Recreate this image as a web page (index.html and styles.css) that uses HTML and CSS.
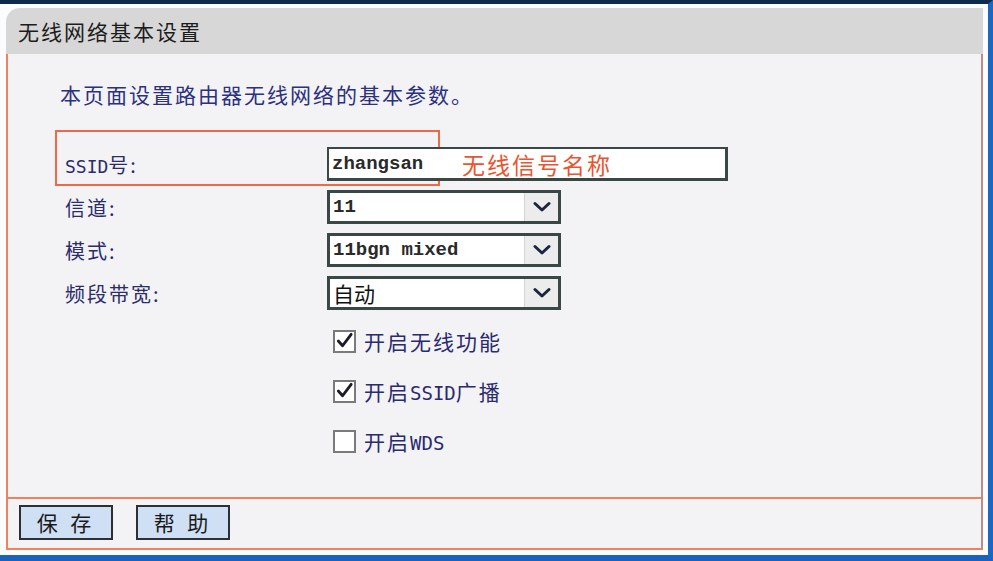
FILE: index.html
```html
<!DOCTYPE html>
<html lang="zh-CN">
<head>
<meta charset="utf-8">
<title>无线网络基本设置</title>
<link rel="stylesheet" href="styles.css">
</head>
<body>
<div class="screen">
  <div class="panel">
    <div class="panel-head">无线网络基本设置</div>
    <div class="panel-body">
      <div class="content">
        <p class="desc">本页面设置路由器无线网络的基本参数。</p>
        <div class="form">
          <div class="mark"></div>
          <div class="label"><span class="mono">SSID</span>号:</div>
          <div class="textbox"><span class="val">zhangsan</span><span class="note">无线信号名称</span></div>
          <div class="label">信道:</div>
          <div class="select"><span class="val">11</span><span class="arrow"><svg width="18" height="12" viewBox="0 0 18 12"><path d="M2 2.5 L9 9 L16 2.5" fill="none" stroke="#1d2340" stroke-width="3" stroke-linecap="round" stroke-linejoin="round"/></svg></span></div>
          <div class="label">模式:</div>
          <div class="select"><span class="val">11bgn mixed</span><span class="arrow"><svg width="18" height="12" viewBox="0 0 18 12"><path d="M2 2.5 L9 9 L16 2.5" fill="none" stroke="#1d2340" stroke-width="3" stroke-linecap="round" stroke-linejoin="round"/></svg></span></div>
          <div class="label">频段带宽:</div>
          <div class="select"><span class="val cjk">自动</span><span class="arrow"><svg width="18" height="12" viewBox="0 0 18 12"><path d="M2 2.5 L9 9 L16 2.5" fill="none" stroke="#1d2340" stroke-width="3" stroke-linecap="round" stroke-linejoin="round"/></svg></span></div>
          <div class="checks">
            <div class="check"><span class="box"><svg width="20" height="20" viewBox="0 0 20 20"><path d="M3.5 10 L8 15 L17 3" fill="none" stroke="#1e1a2a" stroke-width="3" stroke-linecap="round" stroke-linejoin="round"/></svg></span><span class="ctext">开启无线功能</span></div>
            <div class="check"><span class="box"><svg width="20" height="20" viewBox="0 0 20 20"><path d="M3.5 10 L8 15 L17 3" fill="none" stroke="#1e1a2a" stroke-width="3" stroke-linecap="round" stroke-linejoin="round"/></svg></span><span class="ctext">开启<span class="mono">SSID</span>广播</span></div>
            <div class="check"><span class="box"></span><span class="ctext">开启<span class="mono">WDS</span></span></div>
          </div>
        </div>
      </div>
      <div class="actions">
        <button class="btn">保 存</button>
        <button class="btn">帮 助</button>
      </div>
    </div>
  </div>
</div>
</body>
</html>
```

FILE: styles.css
```css
* { box-sizing: border-box; }
html, body { margin: 0; padding: 0; }
body {
  width: 993px;
  height: 561px;
  overflow: hidden;
  font-family: "Noto Sans CJK SC", "Noto Sans", sans-serif;
}
.screen {
  width: 993px;
  height: 561px;
  background: #fbfcfd;
  border-top: 4px solid #0d2a4c;
  border-right: 5px solid #1b67c2;
  border-bottom: 6px solid #1a62bd;
  padding: 4px 5px 5px 6px;
}
.panel {
  height: 542px;
  display: flex;
  flex-direction: column;
}
.panel-head {
  height: 46px;
  flex: none;
  background: #d7d7d7;
  border-top-left-radius: 14px;
  display: flex;
  align-items: center;
  padding: 0 0 1px 12px;
  font-size: 21px;
  letter-spacing: 2px;
  color: #1c1c1c;
}
.panel-body {
  flex: 1;
  display: flex;
  flex-direction: column;
  background: #f3f3f5;
  border-left: 2px solid #f2805c;
  border-right: 2px solid #b88e86;
  border-bottom: 2px solid #f2805c;
}
.content {
  flex: 1;
  padding: 27px 0 0 52px;
  border-bottom: 2px solid #f2805c;
}
.desc {
  margin: 0;
  height: 26px;
  line-height: 26px;
  font-size: 21px;
  letter-spacing: 2px;
  color: #2b3080;
}
.form {
  position: relative;
  margin: 40px 0 0 5px;
  display: grid;
  grid-template-columns: 262px auto;
  grid-auto-rows: 34px;
  row-gap: 9px;
  justify-items: start;
  align-items: center;
}
.mark {
  position: absolute;
  left: -10px;
  top: -17px;
  width: 385px;
  height: 56px;
  border: 2px solid #f06848;
  pointer-events: none;
}
.label {
  font-size: 20px;
  letter-spacing: 2px;
  color: #2c2c6c;
}
.mono {
  font-family: "DejaVu Sans Mono", "Liberation Mono", monospace;
  font-size: 18px;
  letter-spacing: 0;
}
.textbox, .select {
  position: relative;
  height: 34px;
  background: #ffffff;
  border: 3px solid #3a4845;
  display: flex;
  align-items: center;
  padding-left: 3px;
}
.textbox { width: 401px; border-width: 2px 3px 3px 2px; }
.select { width: 234px; }
.val {
  font-family: "Liberation Mono", "DejaVu Sans Mono", monospace;
  font-weight: bold;
  font-size: 19px;
  color: #2a2a2a;
}
.val.cjk {
  font-family: "Noto Sans CJK SC", sans-serif;
  font-weight: normal;
  font-size: 21px;
  color: #111;
}
.note {
  position: absolute;
  left: 133px;
  top: 50%;
  transform: translateY(-50%);
  font-size: 23px;
  letter-spacing: 2px;
  color: #ea5430;
}
.arrow {
  margin-left: auto;
  width: 34px;
  height: 100%;
  background: #ececec;
  border-left: 1px solid #d4d4d4;
  display: flex;
  align-items: center;
  justify-content: center;
}
.checks {
  grid-column: 2;
  grid-row: 5 / span 3;
  align-self: start;
  margin-top: -3px;
  padding-left: 6px;
}
.check {
  height: 50px;
  display: flex;
  align-items: center;
}
.box {
  width: 23px;
  height: 23px;
  background: #fff;
  border: 2px solid #7a7a7a;
  display: flex;
  align-items: center;
  justify-content: center;
  margin-right: 8px;
}
.ctext {
  font-size: 21px;
  letter-spacing: 2px;
  color: #2a2a70;
}
.ctext .mono { font-size: 19px; }
.actions {
  height: 49px;
  flex: none;
  display: flex;
  align-items: flex-start;
  gap: 23px;
  padding: 6px 0 0 11px;
}
.btn {
  width: 94px;
  height: 35px;
  background: #cfe0f5;
  border: 2px solid #2c2f33;
  border-radius: 0;
  font-family: "Noto Sans CJK SC", sans-serif;
  font-size: 21px;
  letter-spacing: 4px;
  color: #1a1a1a;
  padding: 0;
  line-height: 1;
}
```
